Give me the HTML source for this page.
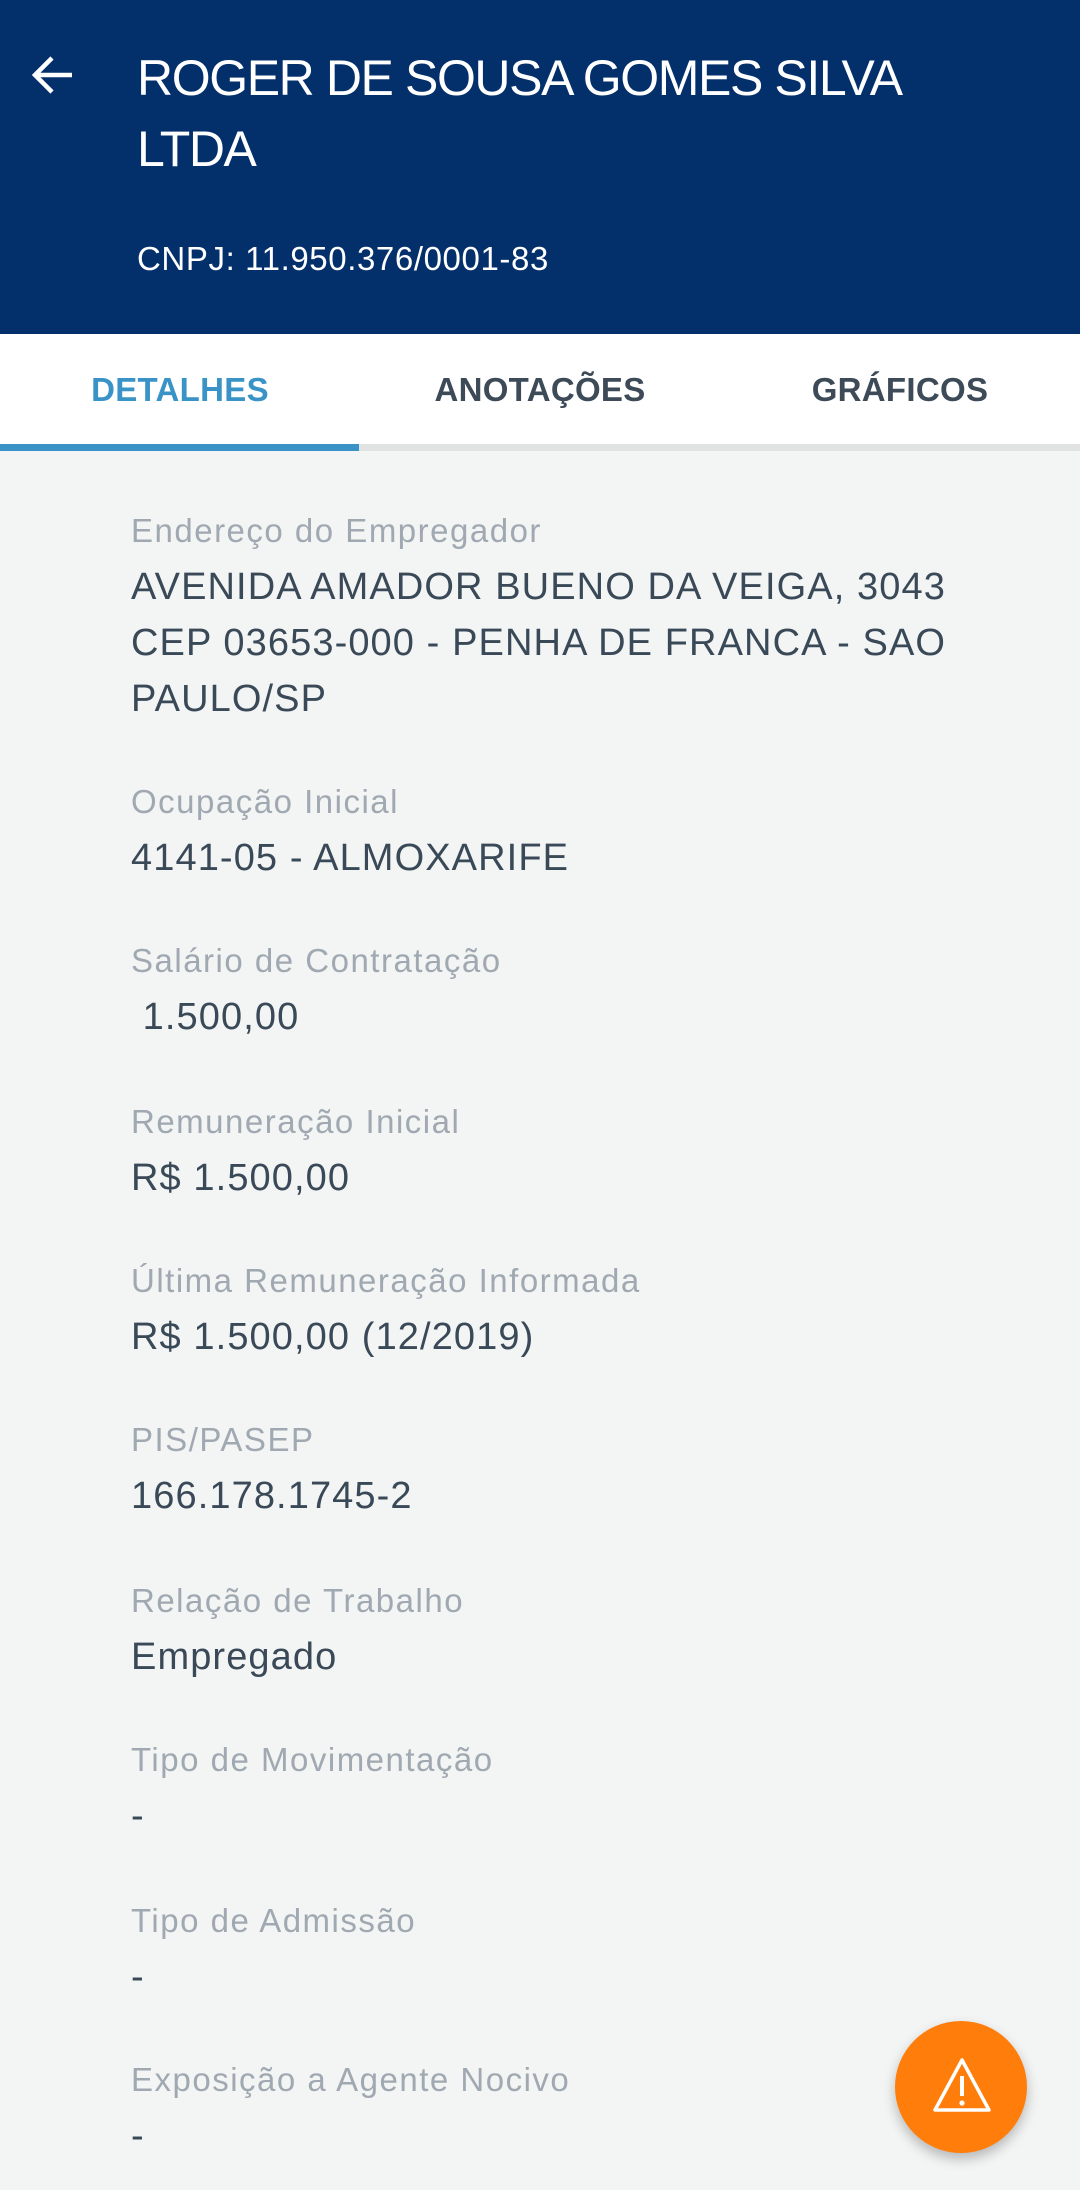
<!DOCTYPE html>
<html><head><meta charset="utf-8"><style>
*{margin:0;padding:0;box-sizing:border-box}
body{width:1080px;height:2190px;background:#f3f4f4;font-family:"Liberation Sans",sans-serif;position:relative;overflow:hidden}
.hdr{position:absolute;left:0;top:0;width:1080px;height:334px;background:#032f6b}
.t{position:absolute;white-space:nowrap}
.tabs{position:absolute;top:334px;left:0;width:1080px;height:110px;background:#fff}
.tab{position:absolute;top:364px;font-size:33px;font-weight:bold;color:#3d4a57;line-height:52px;text-align:center;width:360px;letter-spacing:0.3px}
.lab{position:absolute;left:131px;font-size:33px;color:#a0a9b1;line-height:44px;letter-spacing:1.5px}
.val{position:absolute;left:131px;font-size:38px;color:#3a4957;line-height:56px;letter-spacing:1.1px}
</style></head><body>
<div class="hdr"></div>
<svg class="t" style="left:30px;top:52px" width="46" height="46" viewBox="0 0 46 46"><path d="M42 23H6M22 6L5 23l17 17" stroke="#fff" stroke-width="4.5" fill="none"/></svg>
<div class="t" style="left:137px;top:43px;font-size:50px;line-height:71px;color:#fff;letter-spacing:-1.4px">ROGER DE SOUSA GOMES SILVA<br>LTDA</div>
<div class="t" style="left:137px;top:239px;font-size:33px;line-height:40px;color:#fff;letter-spacing:0.6px">CNPJ: 11.950.376/0001-83</div>
<div class="tabs"></div>
<div class="tab" style="left:0;color:#3a93c6">DETALHES</div>
<div class="tab" style="left:360px">ANOTAÇÕES</div>
<div class="tab" style="left:720px">GRÁFICOS</div>
<div style="position:absolute;top:444px;left:0;width:1080px;height:7px;background:#e1e3e3"></div>
<div style="position:absolute;top:444px;left:0;width:359px;height:7px;background:#3a93c6"></div>

<div class="lab" style="top:509px">Endereço do Empregador</div>
<div class="val" style="top:559px">AVENIDA AMADOR BUENO DA VEIGA, 3043<br>CEP 03653-000 - PENHA DE FRANCA - SAO<br>PAULO/SP</div>
<div class="lab" style="top:780px">Ocupação Inicial</div>
<div class="val" style="top:830px">4141-05 - ALMOXARIFE</div>
<div class="lab" style="top:939px">Salário de Contratação</div>
<div class="val" style="top:989px">&nbsp;1.500,00</div>
<div class="lab" style="top:1100px">Remuneração Inicial</div>
<div class="val" style="top:1150px">R$ 1.500,00</div>
<div class="lab" style="top:1259px">Última Remuneração Informada</div>
<div class="val" style="top:1309px">R$ 1.500,00 (12/2019)</div>
<div class="lab" style="top:1418px">PIS/PASEP</div>
<div class="val" style="top:1468px">166.178.1745-2</div>
<div class="lab" style="top:1579px">Relação de Trabalho</div>
<div class="val" style="top:1629px">Empregado</div>
<div class="lab" style="top:1738px">Tipo de Movimentação</div>
<div class="val" style="top:1788px">-</div>
<div class="lab" style="top:1899px">Tipo de Admissão</div>
<div class="val" style="top:1949px">-</div>
<div class="lab" style="top:2058px">Exposição a Agente Nocivo</div>
<div class="val" style="top:2108px">-</div>

<div style="position:absolute;left:895px;top:2021px;width:132px;height:132px;border-radius:50%;background:#ff7d0a;box-shadow:0 6px 12px rgba(0,0,0,0.25)"></div>
<svg class="t" style="left:931px;top:2056px" width="62" height="58" viewBox="0 0 62 58"><path d="M31 4L4 54h54z" stroke="#fff" stroke-width="3.5" fill="none" stroke-linejoin="round"/><path d="M31 20v20" stroke="#fff" stroke-width="4"/><circle cx="31" cy="47" r="2.6" fill="#fff"/></svg>
</body></html>
